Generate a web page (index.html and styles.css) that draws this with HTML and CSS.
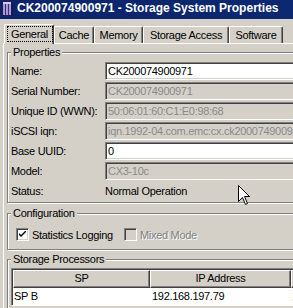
FILE: index.html
```html
<!DOCTYPE html>
<html>
<head>
<meta charset="utf-8">
<link rel="stylesheet" href="styles.css">
</head>
<body>
<div class="window">
  <div class="titlebar">
    <svg class="app-icon" width="11" height="15" viewBox="0 0 11 15">
      <rect x="0.5" y="0.5" width="9" height="14" fill="#a797dc" stroke="#231c4e"/>
      <rect x="1" y="1" width="8" height="2" fill="#d4ccf4"/>
      <line x1="3.5" y1="3" x2="3.5" y2="14" stroke="#3b2f78"/>
      <line x1="6.5" y1="3" x2="6.5" y2="14" stroke="#3b2f78"/>
      <line x1="10.5" y1="2" x2="10.5" y2="15" stroke="#1a1540"/>
    </svg>
    <span class="title">CK200074900971 - Storage System Properties</span>
  </div>

  <div class="tabs">
    <div class="tab tab-general active"><span class="focus">General</span></div>
    <div class="tab tab-cache">Cache</div>
    <div class="tab tab-memory">Memory</div>
    <div class="tab tab-access">Storage Access</div>
    <div class="tab tab-software">Software</div>
  </div>

  <div class="panel">
    <div class="group group-props">
      <div class="legend">Properties</div>
      <div class="rows">
        <div class="field-row"><span class="label">Name:</span><div class="textbox">CK200074900971</div></div>
        <div class="field-row"><span class="label">Serial Number:</span><div class="textbox disabled">CK200074900971</div></div>
        <div class="field-row"><span class="label">Unique ID (WWN):</span><div class="textbox disabled">50:06:01:60:C1:E0:98:68</div></div>
        <div class="field-row"><span class="label">iSCSI iqn:</span><div class="textbox disabled">iqn.1992-04.com.emc:cx.ck200074900971</div></div>
        <div class="field-row"><span class="label">Base UUID:</span><div class="textbox">0</div></div>
        <div class="field-row"><span class="label">Model:</span><div class="textbox disabled">CX3-10c</div></div>
        <div class="field-row"><span class="label">Status:</span><span class="value">Normal Operation</span></div>
      </div>
    </div>

    <div class="group group-config">
      <div class="legend">Configuration</div>
      <div class="check-row">
        <div class="check check-stats">
          <span class="box">
            <svg width="7" height="7" viewBox="0 0 7 7"><path d="M0 2 L0 4 L2 6 L7 1 L7 -1 L2 4 Z" fill="#000"/></svg>
          </span>
          <span>Statistics Logging</span>
        </div>
        <div class="check disabled">
          <span class="box"></span>
          <span class="check-text">Mixed Mode</span>
        </div>
      </div>
    </div>

    <div class="group group-sp">
      <div class="legend">Storage Processors</div>
      <div class="grid">
        <div class="grid-head">
          <div class="th th-sp">SP</div>
          <div class="th th-ip">IP Address</div>
          <div class="th th-x"></div>
        </div>
        <div class="grid-row">
          <div class="td td-sp">SP B</div>
          <div class="td td-ip">192.168.197.79</div>
          <div class="td td-x">1</div>
        </div>
      </div>
    </div>
  </div>

  <svg class="cursor" width="13" height="21" viewBox="0 0 13 21">
    <path d="M0.5 0.5 L0.5 16.5 L4.5 12.5 L7.5 19.5 L9.5 18.5 L6.5 11.5 L11.5 11.5 Z" fill="#fff" stroke="#000" stroke-width="1" stroke-linejoin="miter"/>
  </svg>
</div>
</body>
</html>
```

FILE: styles.css
```css
html, body {
  margin: 0;
  padding: 0;
}

body {
  background: #d4d0c8;
  width: 293px;
  height: 308px;
  overflow: hidden;
  font-family: Tahoma, "Liberation Sans", Arial, sans-serif;
  font-size: 11px;
  letter-spacing: -0.3px;
  color: #000;
}

.window {
  position: relative;
  width: 430px;
  height: 308px;
}

/* Title bar */
.titlebar {
  height: 19px;
  background: linear-gradient(90deg, #0a246a 0%, #0c2870 70%, #10307a 100%);
  display: flex;
  align-items: flex-start;
  padding-left: 2px;
  color: #fff;
}

.app-icon {
  flex: none;
  margin-top: 1px;
}

.title {
  margin-left: 4px;
  padding-top: 1px;
  font-weight: bold;
  font-size: 12px;
  line-height: 14px;
  letter-spacing: 0;
  white-space: nowrap;
}

/* Tabs */
.tabs {
  display: flex;
  align-items: flex-end;
  height: 19px;
  margin-top: 5px;
  padding-left: 4px;
  position: relative;
  z-index: 1;
}

.tab {
  box-sizing: border-box;
  height: 17px;
  display: flex;
  align-items: center;
  justify-content: center;
  background: #d4d0c8;
  border-top: 1px solid #fff;
  border-left: 1px solid #fff;
  border-right: 1px solid #404040;
  box-shadow: inset -1px 0 0 #808080;
  border-radius: 2px 2px 0 0;
  white-space: nowrap;
  line-height: 13px;
  padding-top: 1px;
}

.tab.active {
  height: 20px;
  margin-bottom: -1px;
  padding: 1px 0 2px 1px;
}

.focus {
  box-sizing: border-box;
  width: 46px;
  height: 16px;
  border: 1px dotted #000;
  display: flex;
  align-items: center;
  justify-content: center;
}

.tab-general { width: 50px; }
.tab-cache { width: 40px; }
.tab-memory { width: 49px; }
.tab-access { width: 86px; }
.tab-software { width: 54px; }

/* Panel */
.panel {
  margin-left: 3px;
  border-top: 1px solid #fff;
  border-left: 1px solid #fff;
  padding: 0 0 0 3px;
}

.group {
  border: 1px solid #808080;
  box-shadow: 1px 1px 0 #fff, inset 1px 1px 0 #fff;
  padding: 0 0 0 3px;
}

.legend {
  display: table;
  margin-top: -7px;
  padding: 0 2px;
  line-height: 13px;
  background: #d4d0c8;
}

.group-props {
  margin-top: 8px;
  padding-bottom: 2px;
}

.group-config {
  margin-top: 10px;
  padding-bottom: 6px;
}

.group-sp {
  margin-top: 9px;
  padding-bottom: 20px;
}

/* Fields */
.rows {
  margin-top: 3px;
  display: flex;
  flex-direction: column;
  gap: 2px;
}

.field-row {
  display: flex;
  align-items: center;
  height: 18px;
}

.label {
  flex: none;
  width: 94px;
  white-space: nowrap;
}

.textbox {
  box-sizing: border-box;
  width: 240px;
  height: 18px;
  border: 1px solid;
  border-color: #808080 #fff #fff #808080;
  box-shadow: inset 1px 1px 0 #404040, inset -1px -1px 0 #d4d0c8;
  background: #fff;
  padding-left: 2px;
  display: flex;
  align-items: center;
  white-space: nowrap;
  overflow: hidden;
}

.textbox.disabled {
  background: #d4d0c8;
  color: #8a8a8a;
}

.value {
  white-space: nowrap;
}

/* Checkboxes */
.check-row {
  margin-top: 6px;
  height: 17px;
  display: flex;
  align-items: center;
  padding-left: 5px;
}

.check {
  display: flex;
  align-items: center;
  white-space: nowrap;
}

.check-stats {
  width: 108px;
}

.box {
  box-sizing: border-box;
  flex: none;
  width: 13px;
  height: 13px;
  margin-right: 3px;
  border: 1px solid;
  border-color: #808080 #fff #fff #808080;
  box-shadow: inset 1px 1px 0 #404040, inset -1px -1px 0 #d4d0c8;
  background: #fff;
  display: flex;
  align-items: center;
  justify-content: center;
}

.check.disabled .box {
  background: #d4d0c8;
}

.check.disabled .check-text {
  color: #808080;
  text-shadow: 1px 1px 0 #fff;
}

/* Grid */
.grid {
  margin-top: 2px;
  border: 1px solid;
  border-color: #808080 #fff #fff #808080;
  box-shadow: inset 1px 1px 0 #404040;
  padding: 1px 0 0 1px;
  background: #fff;
}

.grid-head {
  display: flex;
}

.th {
  box-sizing: border-box;
  flex: none;
  height: 18px;
  background: #d4d0c8;
  border-top: 1px solid #fff;
  border-left: 1px solid #fff;
  border-right: 1px solid #404040;
  border-bottom: 1px solid #404040;
  box-shadow: inset -1px -1px 0 #808080;
  text-align: center;
  line-height: 15px;
}

.th-sp { width: 137px; }
.th-ip { width: 141px; }
.th-x { width: 140px; }

.grid-row {
  display: flex;
  height: 17px;
  line-height: 17px;
}

.td {
  box-sizing: border-box;
  flex: none;
  white-space: nowrap;
}

.td-sp { width: 137px; padding-left: 1px; }
.td-ip { width: 141px; padding-left: 2px; }
.td-x { width: 140px; padding-left: 1px; }

/* Mouse pointer overlay */
.cursor {
  position: absolute;
  left: 238px;
  top: 185px;
}
```
